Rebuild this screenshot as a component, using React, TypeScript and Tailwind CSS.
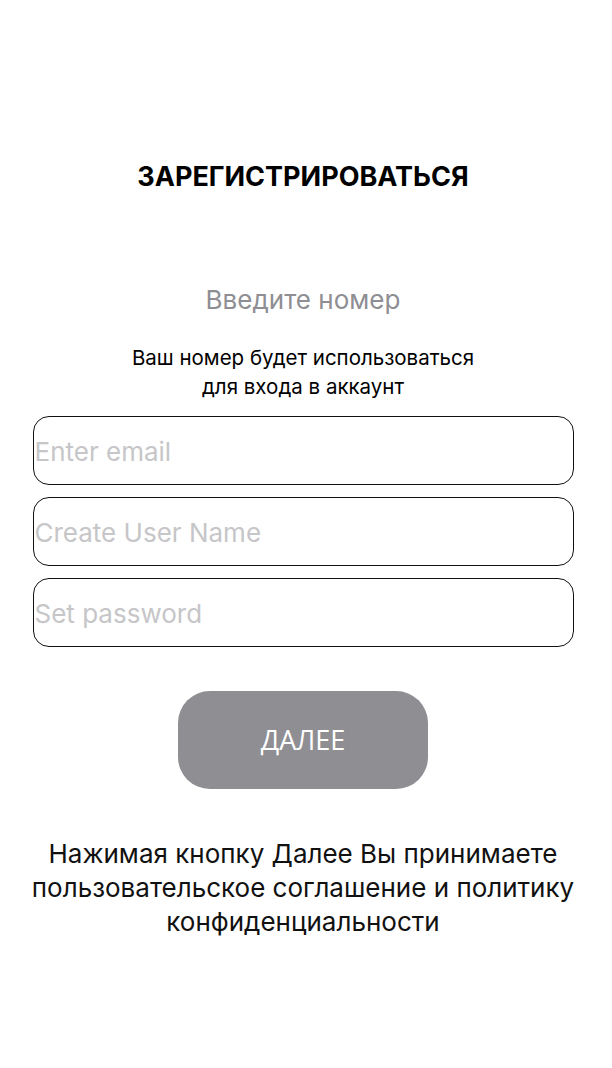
import React from "react";

export default function App() {
  return (
    <div className="w-[612px] h-[1068px] bg-white flex flex-col items-center pr-[6px] text-black font-['Inter','Noto_Sans',sans-serif]">
      <h1 className="mt-[159px] h-[36px] leading-[36px] text-[27px] font-bold">
        ЗАРЕГИСТРИРОВАТЬСЯ
      </h1>
      <div className="mt-[88px] h-[34px] leading-[34px] text-[26px] text-[#8e8e93]">
        Введите номер
      </div>
      <p className="mt-[26px] text-[20.5px] leading-[29px] text-center">
        Ваш номер будет использоваться
        <br />
        для входа в аккаунт
      </p>
      <div className="mt-[15px] w-[541px] flex flex-col gap-[12px]">
        {["Enter email", "Create User Name", "Set password"].map((p) => (
          <div
            key={p}
            className="h-[69px] rounded-[16px] border-[1.75px] border-[#111] flex items-center pl-[1px] pt-[1px]"
          >
            <span className="text-[26px] text-[#c6c6c8]">{p}</span>
          </div>
        ))}
      </div>
      <button className="mt-[44px] w-[250px] h-[98px] rounded-[32px] bg-[#8e8e93] text-white text-[27px] font-['Open_Sans',sans-serif]">
        ДАЛЕЕ
      </button>
      <p className="mt-[48px] text-[26px] leading-[34px] text-center text-[#111]">
        Нажимая кнопку Далее Вы принимаете
        <br />
        пользовательское соглашение и политику
        <br />
        конфиденциальности
      </p>
    </div>
  );
}
